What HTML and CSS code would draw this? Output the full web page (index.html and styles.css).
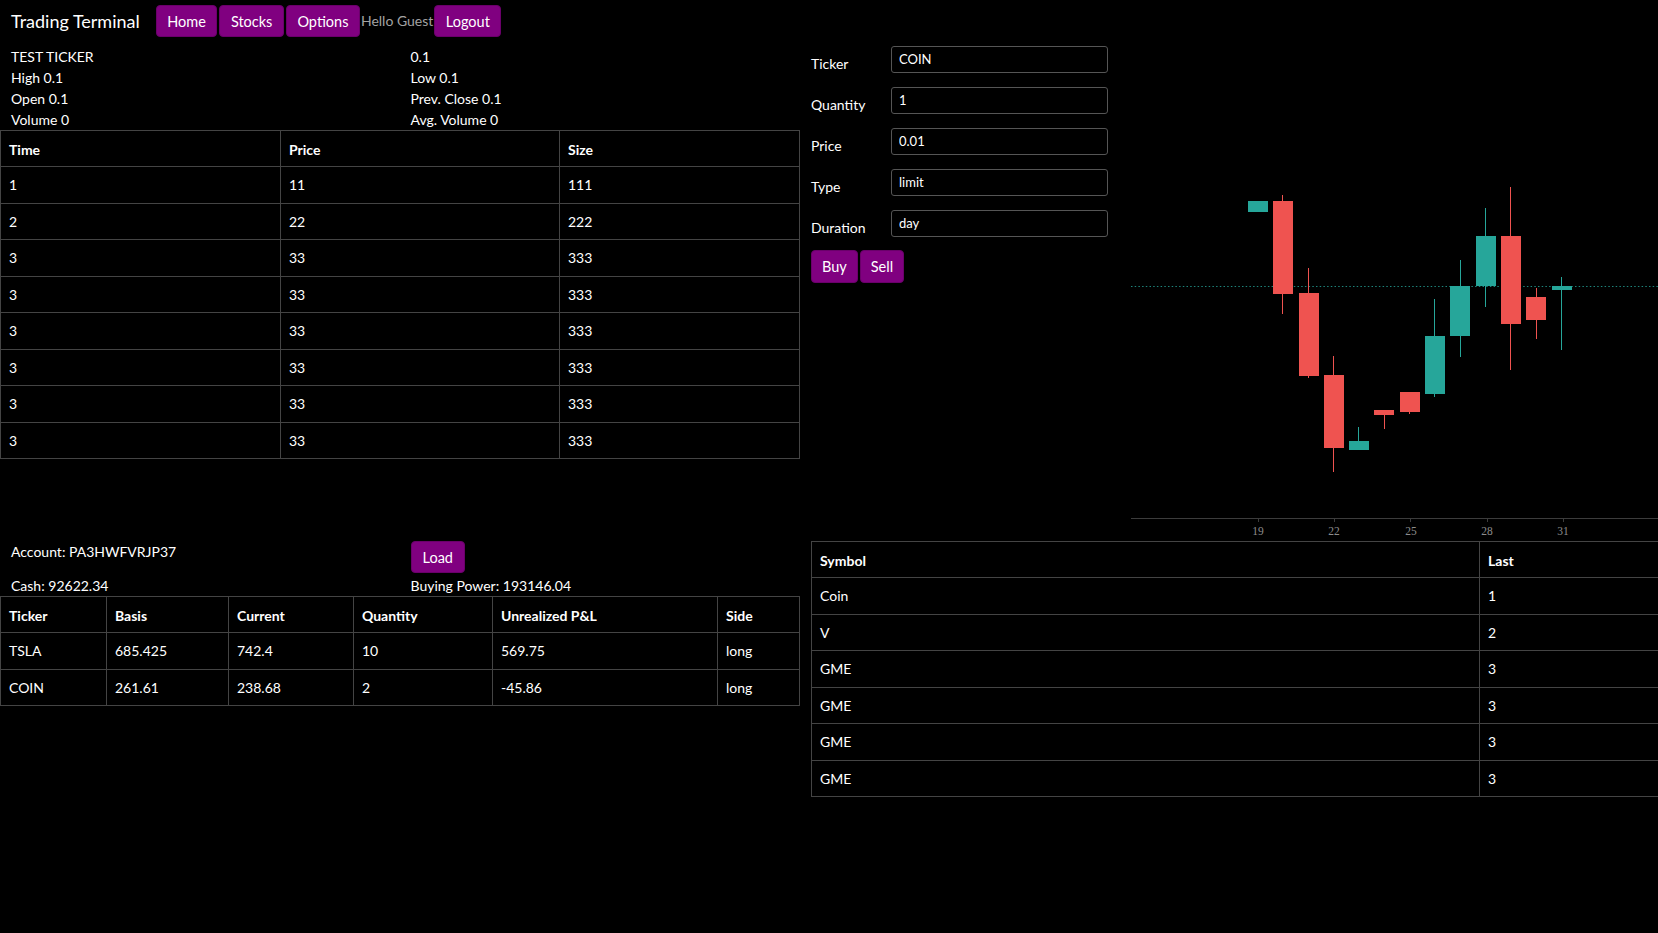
FILE: index.html
```html
<!DOCTYPE html>
<html lang="en">
<head>
<meta charset="utf-8">
<title>Trading Terminal</title>
<link rel="stylesheet" href="styles.css">
</head>
<body>
<header class="topbar">
  <span class="brand">Trading Terminal</span>
  <button class="btn">Home</button>
  <button class="btn">Stocks</button>
  <button class="btn">Options</button>
  <span class="greet">Hello Guest</span>
  <button class="btn">Logout</button>
</header>
<main class="main">
  <section class="quote">
    <div class="info">
      <div>TEST TICKER</div><div>0.1</div>
      <div>High 0.1</div><div>Low 0.1</div>
      <div>Open 0.1</div><div>Prev. Close 0.1</div>
      <div>Volume 0</div><div>Avg. Volume 0</div>
    </div>
    <table class="grid t-trades">
      <colgroup><col class="c1"><col class="c2"><col class="c3"></colgroup>
      <thead><tr><th>Time</th><th>Price</th><th>Size</th></tr></thead>
      <tbody>
        <tr><td>1</td><td>11</td><td>111</td></tr>
        <tr><td>2</td><td>22</td><td>222</td></tr>
        <tr><td>3</td><td>33</td><td>333</td></tr>
        <tr><td>3</td><td>33</td><td>333</td></tr>
        <tr><td>3</td><td>33</td><td>333</td></tr>
        <tr><td>3</td><td>33</td><td>333</td></tr>
        <tr><td>3</td><td>33</td><td>333</td></tr>
        <tr><td>3</td><td>33</td><td>333</td></tr>
      </tbody>
    </table>
  </section>
  <section class="trade">
    <form class="order">
      <div class="field"><label>Ticker</label><input value="COIN"></div>
      <div class="field"><label>Quantity</label><input value="1"></div>
      <div class="field"><label>Price</label><input value="0.01"></div>
      <div class="field"><label>Type</label><input value="limit"></div>
      <div class="field"><label>Duration</label><input value="day"></div>
      <div class="actions"><button type="button" class="btn btn-sm">Buy</button><button type="button" class="btn btn-sm">Sell</button></div>
    </form>
    <svg class="chart" width="527" height="495" viewBox="1131 46 527 495">
      <line x1="1131" y1="286.5" x2="1658" y2="286.5" stroke="#26a69a" stroke-width="1" stroke-dasharray="1.5 2.2" opacity="0.8"/>
      <g stroke-width="1">
        <line x1="1282.5" y1="195" x2="1282.5" y2="314" stroke="#ef5350"/>
        <line x1="1308.5" y1="268" x2="1308.5" y2="378" stroke="#ef5350"/>
        <line x1="1333.5" y1="356" x2="1333.5" y2="472" stroke="#ef5350"/>
        <line x1="1358.5" y1="427" x2="1358.5" y2="450" stroke="#26a69a"/>
        <line x1="1384.5" y1="410" x2="1384.5" y2="429" stroke="#ef5350"/>
        <line x1="1409.5" y1="392" x2="1409.5" y2="414" stroke="#ef5350"/>
        <line x1="1434.5" y1="299" x2="1434.5" y2="397" stroke="#26a69a"/>
        <line x1="1460.5" y1="260" x2="1460.5" y2="357" stroke="#26a69a"/>
        <line x1="1485.5" y1="208" x2="1485.5" y2="307" stroke="#26a69a"/>
        <line x1="1510.5" y1="187" x2="1510.5" y2="370" stroke="#ef5350"/>
        <line x1="1536.5" y1="288" x2="1536.5" y2="339" stroke="#ef5350"/>
        <line x1="1561.5" y1="277" x2="1561.5" y2="350" stroke="#26a69a"/>
      </g>
      <rect x="1248" y="201" width="20" height="11" fill="#26a69a"/>
      <rect x="1273" y="201" width="20" height="93" fill="#ef5350"/>
      <rect x="1299" y="293" width="20" height="83" fill="#ef5350"/>
      <rect x="1324" y="375" width="20" height="73" fill="#ef5350"/>
      <rect x="1349" y="441" width="20" height="9" fill="#26a69a"/>
      <rect x="1374" y="410" width="20" height="5" fill="#ef5350"/>
      <rect x="1400" y="392" width="20" height="20" fill="#ef5350"/>
      <rect x="1425" y="336" width="20" height="58" fill="#26a69a"/>
      <rect x="1450" y="286" width="20" height="50" fill="#26a69a"/>
      <rect x="1476" y="236" width="20" height="50" fill="#26a69a"/>
      <rect x="1501" y="236" width="20" height="88" fill="#ef5350"/>
      <rect x="1526" y="297" width="20" height="23" fill="#ef5350"/>
      <rect x="1552" y="286" width="20" height="4" fill="#26a69a"/>
      <line x1="1131" y1="518.5" x2="1658" y2="518.5" stroke="#3c3c3c"/>
      <g stroke="#3c3c3c">
        <line x1="1258.5" y1="519" x2="1258.5" y2="522"/>
        <line x1="1334.5" y1="519" x2="1334.5" y2="522"/>
        <line x1="1410.5" y1="519" x2="1410.5" y2="522"/>
        <line x1="1487.5" y1="519" x2="1487.5" y2="522"/>
        <line x1="1563.5" y1="519" x2="1563.5" y2="522"/>
      </g>
      <g class="ticks" text-anchor="middle">
        <text x="1258" y="535">19</text>
        <text x="1334" y="535">22</text>
        <text x="1411" y="535">25</text>
        <text x="1487" y="535">28</text>
        <text x="1563" y="535">31</text>
      </g>
    </svg>
  </section>
  <section class="account">
    <div class="acct">
      <div class="acct-id">Account: PA3HWFVRJP37</div>
      <div><button class="btn btn-load">Load</button></div>
      <div class="acct-line">Cash: 92622.34</div>
      <div class="acct-line">Buying Power: 193146.04</div>
    </div>
    <table class="grid t-pos">
      <colgroup><col class="p1"><col class="p2"><col class="p3"><col class="p4"><col class="p5"><col class="p6"></colgroup>
      <thead><tr><th>Ticker</th><th>Basis</th><th>Current</th><th>Quantity</th><th>Unrealized P&amp;L</th><th>Side</th></tr></thead>
      <tbody>
        <tr><td>TSLA</td><td>685.425</td><td>742.4</td><td>10</td><td>569.75</td><td>long</td></tr>
        <tr><td>COIN</td><td>261.61</td><td>238.68</td><td>2</td><td>-45.86</td><td>long</td></tr>
      </tbody>
    </table>
  </section>
  <section class="watch">
    <table class="grid t-watch">
      <colgroup><col class="w1"><col class="w2"></colgroup>
      <thead><tr><th>Symbol</th><th>Last</th></tr></thead>
      <tbody>
        <tr><td>Coin</td><td>1</td></tr>
        <tr><td>V</td><td>2</td></tr>
        <tr><td>GME</td><td>3</td></tr>
        <tr><td>GME</td><td>3</td></tr>
        <tr><td>GME</td><td>3</td></tr>
        <tr><td>GME</td><td>3</td></tr>
      </tbody>
    </table>
  </section>
</main>
</body>
</html>
```
FILE: styles.css
```css
html, body {
  margin: 0;
  padding: 0;
  background: #000;
  color: #fff;
  overflow: hidden;
  font-family: "Lato", "Noto Sans", sans-serif;
  font-size: 14px;
}

.topbar {
  height: 46px;
  display: flex;
  align-items: flex-start;
  padding-left: 11px;
  box-sizing: border-box;
}

.brand {
  font-size: 18px;
  line-height: 42px;
  margin-right: 15px;
}

.btn {
  background: #800080;
  color: #fff;
  border: 1px solid #6a006a;
  border-radius: 4px;
  font-family: inherit;
  font-size: 14.5px;
  height: 32px;
  padding: 0 10.5px;
  margin: 5px 1px 0;
  cursor: pointer;
}

.greet {
  color: #a3a3a3;
  font-size: 14px;
  line-height: 42px;
}

.main {
  display: grid;
  grid-template-columns: 799px 1fr;
  grid-template-rows: 495px auto;
  column-gap: 12px;
}

.info {
  display: grid;
  grid-template-columns: 1fr 1fr;
  line-height: 21px;
}

.info > div {
  padding-left: 11px;
}

.grid {
  border-collapse: collapse;
  table-layout: fixed;
}

.grid th,
.grid td {
  border: 1px solid #444;
  padding: 8px 8px;
  line-height: 19.44px;
  text-align: left;
  font-size: 14px;
  white-space: nowrap;
}

.grid th {
  font-weight: 700;
  padding-top: 9px;
  padding-bottom: 7px;
}

.t-trades { width: 799px; }
.c1 { width: 280px; }
.c2 { width: 279px; }
.c3 { width: 240px; }

.trade {
  display: flex;
  align-items: flex-start;
}

.order {
  width: 320px;
  display: flex;
  flex-direction: column;
  gap: 14px;
}

.field {
  display: flex;
  align-items: flex-start;
  height: 27px;
}

.field label {
  width: 80px;
  line-height: 21px;
  padding-top: 7px;
  font-size: 14px;
}

.field input {
  width: 217px;
  height: 27px;
  box-sizing: border-box;
  background: #000;
  color: #fff;
  border: 1px solid #555;
  border-radius: 3px;
  padding: 0 7px 2px;
  font-family: inherit;
  font-size: 13px;
}

.actions {
  display: flex;
  gap: 2px;
  margin-top: -1px;
}

.btn-sm {
  margin: 0;
  height: 33px;
  padding: 0 10px;
}

.chart {
  display: block;
}

.ticks text {
  font-family: "Liberation Serif", serif;
  font-size: 11.5px;
  fill: #8c8c8c;
}

.acct {
  display: grid;
  grid-template-columns: 399.5px 399.5px;
  row-gap: 2px;
}

.acct > div {
  padding-left: 11px;
}

.acct-id {
  line-height: 21px;
}

.btn-load {
  margin: 0;
  height: 32px;
  padding: 0 11px;
}

.acct-line {
  line-height: 21px;
}

.t-pos { width: 799px; }
.p1 { width: 106px; }
.p2 { width: 122px; }
.p3 { width: 125px; }
.p4 { width: 139px; }
.p5 { width: 225px; }
.p6 { width: 82px; }

.watch {
  overflow: hidden;
}

.t-watch { width: 900px; }
.w1 { width: 668px; }
.w2 { width: 232px; }
```
